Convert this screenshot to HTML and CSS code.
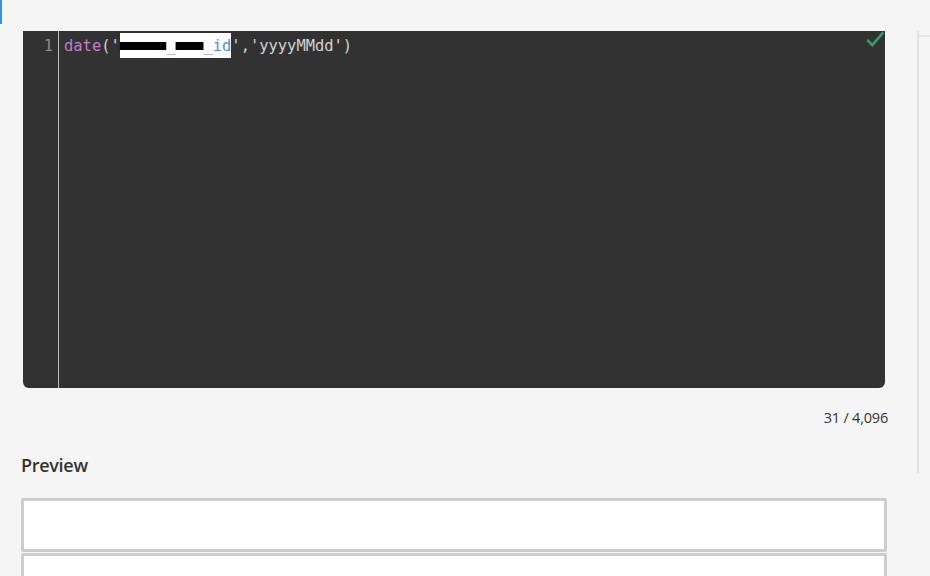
FILE: index.html
```html
<!DOCTYPE html>
<html lang="en">
<head>
    <meta charset="UTF-8">
    <meta name="viewport" content="width=device-width, initial-scale=1.0">
    <title>Expression editor</title>
    <link rel="stylesheet" href="styles.css">
</head>
<body>
    <div class="page">
        <div class="main">
            <div class="focus-mark"></div>

            <div class="editor">
                <div class="gutter">
                    <div class="line-no">1</div>
                </div>
                <div class="code">
                    <div class="code-line"><span class="fn">date</span>('<span class="redact"><span class="blot">xxxxx</span>_<span class="blot">xxx</span>_id</span>','yyyyMMdd')</div>
                </div>
                <svg class="valid" width="20" height="16" viewBox="0 0 20 16">
                    <path d="M2.3 9 L7.3 14 L18.3 1.3" fill="none" stroke="#389a72" stroke-width="2.6"/>
                </svg>
            </div>

            <div class="counter">31 / 4,096</div>

            <h2 class="section-title">Preview</h2>

            <div class="preview">
                <div class="preview-row"></div>
                <div class="preview-row"></div>
            </div>
        </div>

        <div class="side">
            <div class="side-head"></div>
        </div>
    </div>
</body>
</html>
```

FILE: styles.css
```css
body {
    margin: 0;
    background-color: #f5f5f5;
    font-family: 'Open Sans', 'Noto Sans', sans-serif;
    color: #333;
    height: 576px;
    overflow: hidden;
}

.page {
    display: flex;
    align-items: flex-start;
}

.main {
    width: 866px;
    padding: 0 30px 0 21px;
    display: flex;
    flex-direction: column;
}

.focus-mark {
    margin-left: -21px;
    width: 2px;
    height: 24px;
    background-color: #3d8fe0;
}

.editor {
    position: relative;
    margin: 7px 2px 0;
    height: 357px;
    display: flex;
    background-color: #323232;
    border-radius: 0 0 6px 6px;
    font-family: 'DejaVu Sans Mono', 'Liberation Mono', monospace;
    font-size: 15.45px;
    line-height: 20px;
}

.gutter {
    width: 36px;
    border-right: 1px solid #bdbdbd;
    padding-top: 5px;
    box-sizing: border-box;
}

.line-no {
    text-align: right;
    padding-right: 5px;
    color: #8a8a8a;
}

.code {
    padding: 5px 0 0 5px;
    color: #d2d2d2;
}

.code-line {
    white-space: pre;
}

.fn {
    color: #c47bd3;
}

.redact {
    background-color: #fff;
    color: #4f8fd6;
    padding: 4px 0 3px;
}

.blot {
    color: transparent;
    text-decoration: line-through;
    text-decoration-color: #000;
    text-decoration-thickness: 8px;
}

.valid {
    position: absolute;
    top: 0;
    right: 0;
}

.counter {
    margin-top: 20px;
    margin-right: -1px;
    text-align: right;
    font-size: 14.5px;
    letter-spacing: -0.2px;
    line-height: 19px;
    color: #333;
}

.section-title {
    margin: 26px 0 0;
    font-size: 18px;
    font-weight: 600;
    letter-spacing: -0.3px;
    line-height: 24px;
    color: #333;
}

.preview {
    margin-top: 21px;
    display: flex;
    flex-direction: column;
    gap: 1px;
}

.preview-row {
    height: 48px;
    background-color: #fff;
    border: 3px solid #cdcdcd;
    border-radius: 2px;
}

.side {
    margin-top: 31px;
    height: 442px;
    flex: 1;
    border-left: 2px solid #e2e2e2;
}

.side-head {
    margin-top: 4px;
    border-top: 2px solid #e6e6e6;
}
```
